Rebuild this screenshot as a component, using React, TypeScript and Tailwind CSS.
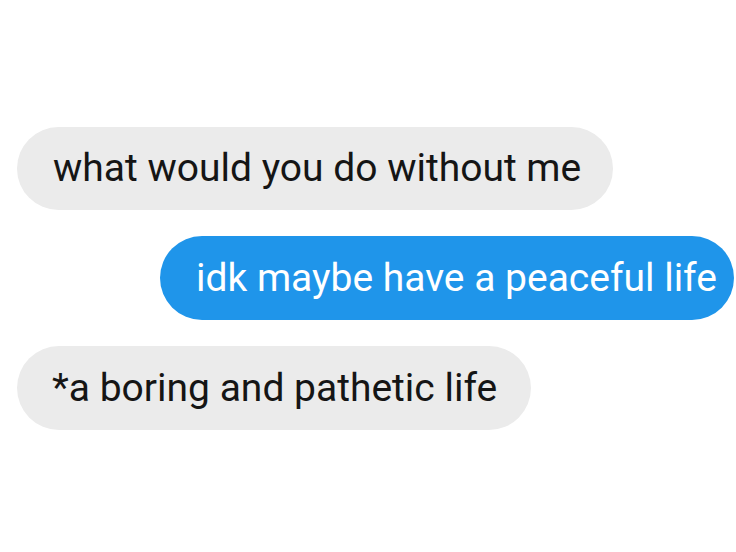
import React from "react";

export default function App() {
  return (
    <div
      className="w-[736px] h-[552px] bg-white overflow-hidden flex flex-col pt-[127px] gap-[26px]"
      style={{ fontFamily: "Roboto, 'Noto Sans', sans-serif" }}
    >
      <div className="self-start ml-[17px] h-[83px] rounded-full bg-[#ebebeb] flex items-center pl-[36px] pr-[32px] text-[39px] text-[#151515] leading-none whitespace-nowrap">
        what would you do without me
      </div>
      <div className="self-start ml-[160px] h-[84px] w-[574px] rounded-full bg-[#1f95ea] flex items-center pl-[36px] text-[39px] text-white leading-none whitespace-nowrap">
        idk maybe have a peaceful life
      </div>
      <div className="self-start ml-[17px] h-[84px] rounded-full bg-[#ebebeb] flex items-center pl-[35px] pr-[34px] text-[39px] text-[#151515] leading-none whitespace-nowrap">
        *a boring and pathetic life
      </div>
    </div>
  );
}
